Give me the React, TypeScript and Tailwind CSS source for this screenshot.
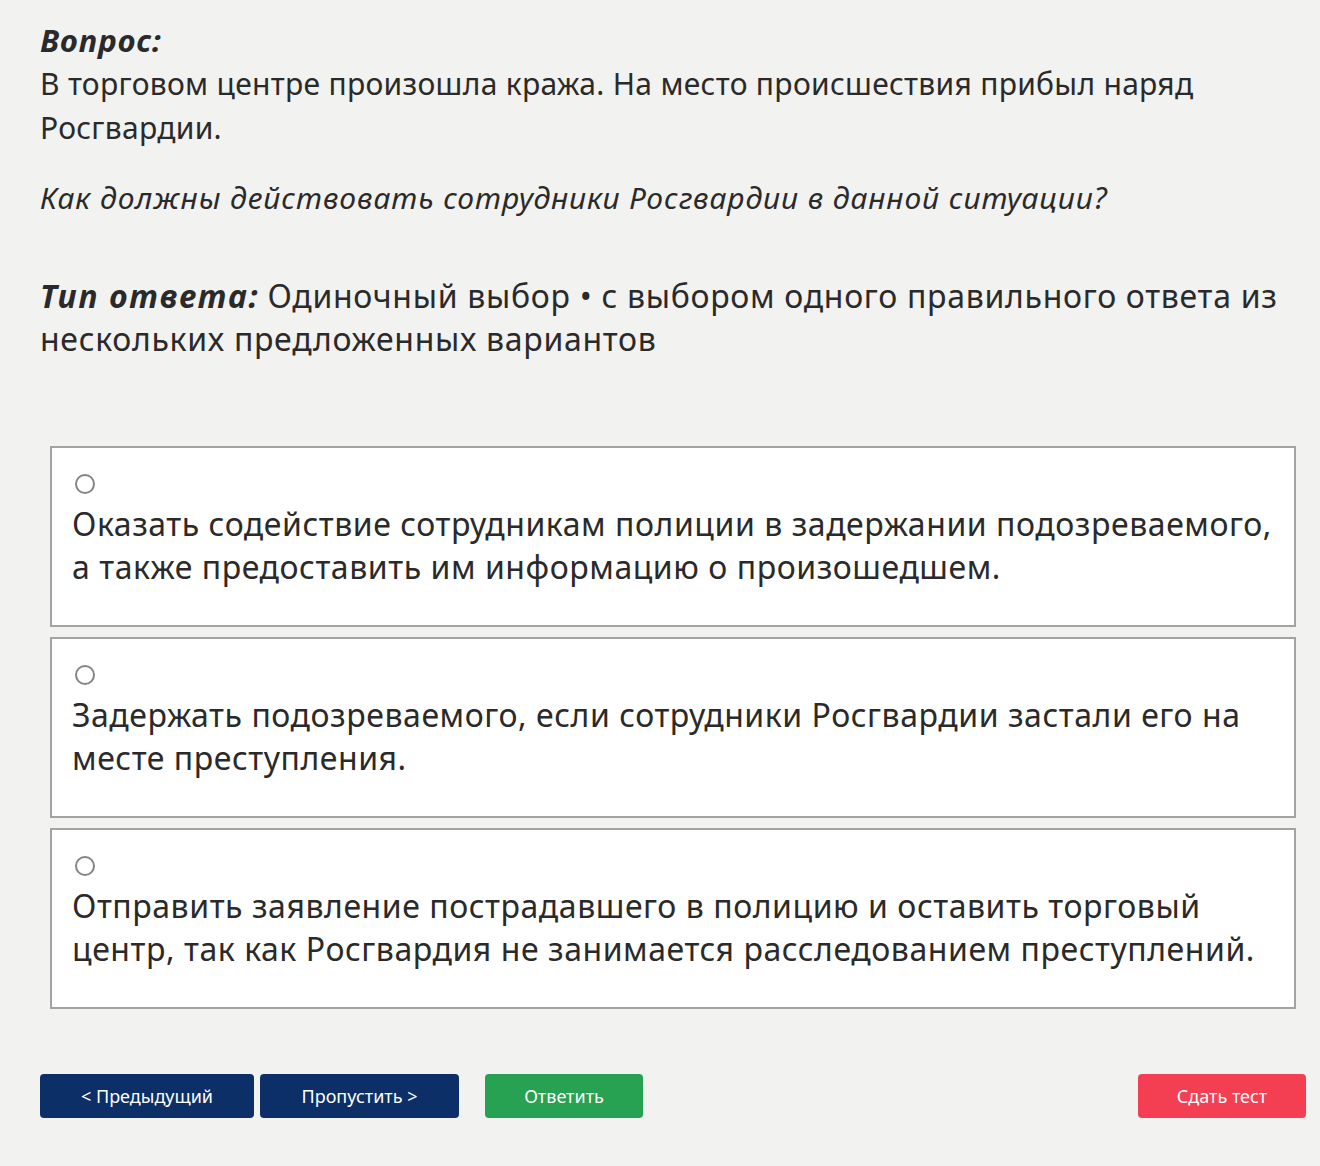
import React from "react";

const options = [
  "Оказать содействие сотрудникам полиции в задержании подозреваемого, а также предоставить им информацию о произошедшем.",
  "Задержать подозреваемого, если сотрудники Росгвардии застали его на месте преступления.",
  "Отправить заявление пострадавшего в полицию и оставить торговый центр, так как Росгвардия не занимается расследованием преступлений.",
];

export default function App() {
  return (
    <div
      className="min-h-[1166px] w-[1320px] bg-[#f2f2f1] text-[#2a2a2a]"
      style={{ fontFamily: '"Noto Sans", "Open Sans", sans-serif' }}
    >
      <div className="px-[40px] pt-[18px]">
        <div className="text-[31px] font-bold italic leading-[44px] tracking-[1px]">Вопрос:</div>
        <p className="text-[30px] leading-[44px] tracking-[0.3px] pr-[60px]">
          В торговом центре произошла кража. На место происшествия прибыл наряд Росгвардии.
        </p>
        <p className="mt-[26px] text-[30px] italic leading-[44px] tracking-[0.9px]">
          Как должны действовать сотрудники Росгвардии в данной ситуации?
        </p>
        <p className="mt-[54px] text-[32px] leading-[43px] tracking-[0.7px]">
          <span className="mr-[8px] font-bold italic tracking-[1.8px]">Тип ответа:</span>
          <span>Одиночный выбор • с выбором одного правильного ответа из нескольких предложенных вариантов</span>
        </p>
      </div>

      <div className="mt-[86px] ml-[50px] flex w-[1246px] flex-col gap-[10px]">
        {options.map((o, i) => (
          <label
            key={i}
            className="flex h-[181px] flex-col border-2 border-[#a3a3a3] bg-white pl-[20px] pr-[8px] pt-[26px]"
          >
            <span className="ml-[3px] block h-[20px] w-[20px] rounded-full border-2 border-[#858585] bg-white" />
            <span className="mt-[8px] text-[32px] leading-[43px] tracking-[0.55px]">{o}</span>
          </label>
        ))}
      </div>

      <div className="mt-[65px] flex items-center px-[40px]">
        <button className="h-[44px] w-[214px] rounded-[4px] bg-[#0b2f66] text-[18px] text-white">
          &lt; Предыдущий
        </button>
        <button className="ml-[6px] h-[44px] w-[199px] rounded-[4px] bg-[#0b2f66] text-[18px] text-white">
          Пропустить &gt;
        </button>
        <button className="ml-[26px] h-[44px] w-[158px] rounded-[4px] bg-[#27a152] text-[18px] text-white">
          Ответить
        </button>
        <button className="ml-auto mr-[-26px] h-[44px] w-[168px] rounded-[4px] bg-[#f43f52] text-[18px] text-white">
          Сдать тест
        </button>
      </div>
    </div>
  );
}
